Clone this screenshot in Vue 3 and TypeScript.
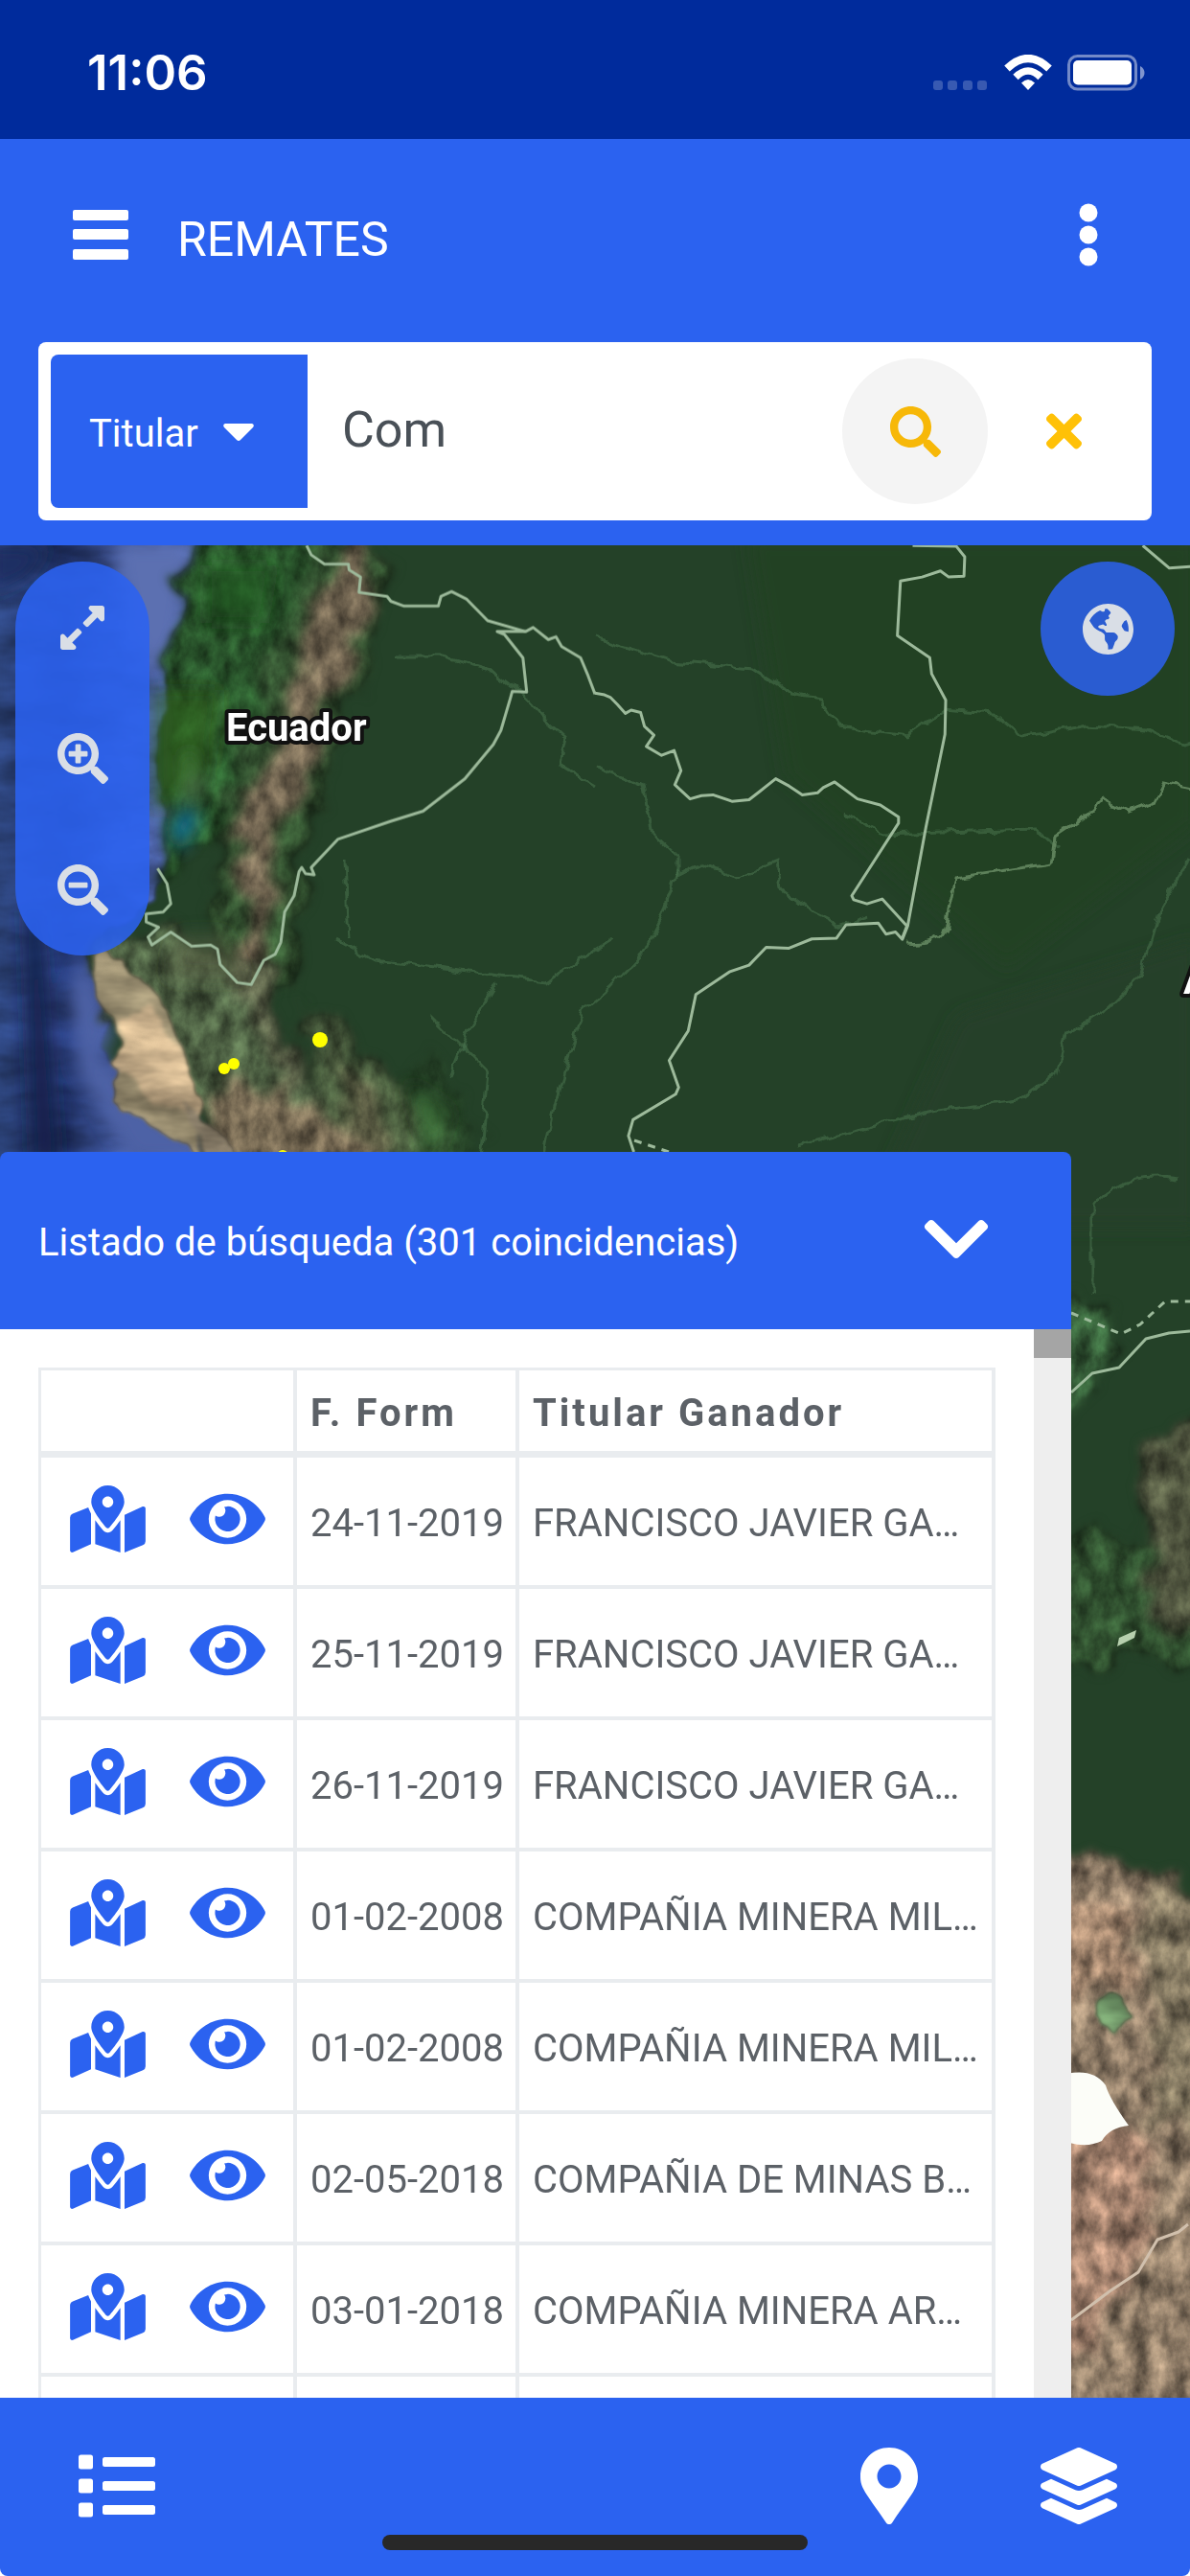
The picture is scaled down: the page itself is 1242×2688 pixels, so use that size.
<script setup lang="ts">
import { ref } from 'vue'

interface Result {
  date: string
  owner: string
}

const field = ref('Titular')
const query = ref('Com')
const total = 301

const results: Result[] = [
  { date: '24-11-2019', owner: 'FRANCISCO JAVIER GA…' },
  { date: '25-11-2019', owner: 'FRANCISCO JAVIER GA…' },
  { date: '26-11-2019', owner: 'FRANCISCO JAVIER GA…' },
  { date: '01-02-2008', owner: 'COMPAÑIA MINERA MIL…' },
  { date: '01-02-2008', owner: 'COMPAÑIA MINERA MIL…' },
  { date: '02-05-2018', owner: 'COMPAÑIA DE MINAS B…' },
  { date: '03-01-2018', owner: 'COMPAÑIA MINERA AR…' },
]

const icons = {
  search:
    'M505 442.7L405.3 343c-4.5-4.5-10.6-7-17-7H372c27.6-35.3 44-79.7 44-128C416 93.1 322.9 0 208 0S0 93.1 0 208s93.1 208 208 208c48.3 0 92.7-16.4 128-44v16.3c0 6.4 2.5 12.5 7 17l99.7 99.7c9.4 9.4 24.6 9.4 33.9 0l28.3-28.3c9.4-9.4 9.4-24.6.1-34zM208 336c-70.7 0-128-57.2-128-128 0-70.7 57.2-128 128-128 70.7 0 128 57.2 128 128 0 70.7-57.2 128-128 128z',
  times:
    'M242.72 256l100.07-100.07c12.28-12.28 12.28-32.19 0-44.48l-22.24-22.24c-12.28-12.28-32.19-12.28-44.48 0L176 189.28 75.93 89.21c-12.28-12.28-32.19-12.28-44.48 0L9.21 111.45c-12.28 12.28-12.28 32.19 0 44.48L109.28 256 9.21 356.07c-12.28 12.28-12.28 32.19 0 44.48l22.24 22.24c12.28 12.28 32.2 12.28 44.48 0L176 322.72l100.07 100.07c12.28 12.28 32.2 12.28 44.48 0l22.24-22.24c12.28-12.28 12.28-32.19 0-44.48L242.72 256z',
  expand:
    'M212.686 315.314L120 408l32.922 31.029c15.12 15.12 4.412 40.971-16.97 40.971h-112C10.697 480 0 469.255 0 456V344c0-21.382 25.803-32.09 40.922-16.971L72 360l92.686-92.686c6.248-6.248 16.379-6.247 22.628 0l25.372 25.373c6.249 6.248 6.249 16.378 0 22.627zm22.628-118.628L328 104l-32.922-31.029C279.958 57.851 290.666 32 312.048 32h112C437.303 32 448 42.745 448 56v112c0 21.382-25.803 32.09-40.922 16.971L376 152l-92.686 92.686c-6.248 6.248-16.379 6.247-22.628 0l-25.372-25.373c-6.249-6.248-6.249-16.378 0-22.627z',
  lens:
    'M505 476.7L476.7 505c-9.4 9.4-24.6 9.4-33.9 0L343 405.3c-4.5-4.5-7-10.6-7-17V372c-35.3 27.6-79.7 44-128 44C93.1 416 0 322.9 0 208S93.1 0 208 0s208 93.1 208 208c0 48.3-16.4 92.7-44 128h16.3c6.4 0 12.5 2.5 17 7l99.7 99.7c9.3 9.4 9.3 24.6 0 34zM344 208c0-75.2-60.8-136-136-136S72 132.8 72 208s60.8 136 136 136 136-60.8 136-136z',
  plus:
    'M304 192v32c0 6.6-5.4 12-12 12h-56v56c0 6.6-5.4 12-12 12h-32c-6.6 0-12-5.4-12-12v-56h-56c-6.6 0-12-5.4-12-12v-32c0-6.6 5.4-12 12-12h56v-56c0-6.6 5.4-12 12-12h32c6.6 0 12 5.4 12 12v56h56c6.6 0 12 5.4 12 12z',
  minus:
    'M304 192v32c0 6.6-5.4 12-12 12H124c-6.6 0-12-5.4-12-12v-32c0-6.6 5.4-12 12-12h168c6.6 0 12 5.4 12 12z',
  globe:
    'M248 8C111.03 8 0 119.03 0 256s111.03 248 248 248 248-111.03 248-248S384.97 8 248 8zm82.29 357.6c-3.9 3.88-7.99 7.95-11.31 11.28-2.99 3-5.1 6.7-6.17 10.71-1.51 5.66-2.73 11.38-4.77 16.87l-17.39 46.85c-13.76 3-28 4.69-42.65 4.69v-27.38c1.69-12.62-7.64-36.26-22.63-51.25-6-6-9.37-14.14-9.37-22.63v-32.01c0-11.64-6.27-22.34-16.46-27.97-14.37-7.95-34.81-19.06-48.81-26.11-11.48-5.78-22.1-13.14-31.65-21.75l-.8-.72a114.792 114.792 0 0 1-18.06-20.74c-9.38-13.77-24.66-36.42-34.59-51.14 20.47-45.5 57.36-82.04 103.2-101.89l24.01 12.01C203.48 89.74 216 82.01 216 70.11v-11.3c7.99-1.29 16.12-2.11 24.39-2.42l28.3 28.3c6.25 6.25 6.25 16.38 0 22.63L264 112l-10.34 10.34c-3.12 3.12-3.12 8.19 0 11.31l4.69 4.69c3.12 3.12 3.12 8.19 0 11.31l-8 8a8.008 8.008 0 0 1-5.66 2.34h-8.99c-2.08 0-4.08.81-5.58 2.27l-9.92 9.65a8.008 8.008 0 0 0-1.58 9.31l15.59 31.19c2.66 5.32-1.21 11.58-7.15 11.58h-5.64c-1.93 0-3.79-.7-5.24-1.96l-9.28-8.06a16.017 16.017 0 0 0-15.55-3.1l-31.17 10.39a11.95 11.95 0 0 0-8.17 11.34c0 4.53 2.56 8.66 6.61 10.69l11.08 5.54c9.41 4.71 19.79 7.16 30.31 7.16s22.59 27.29 32 32h66.75c8.49 0 16.62 3.37 22.63 9.37l13.69 13.69a30.503 30.503 0 0 1 8.93 21.57 46.536 46.536 0 0 1-13.72 32.98zM417 274.25c-5.79-1.45-10.84-5-14.15-9.97l-17.98-26.97a23.97 23.97 0 0 1 0-26.62l19.59-29.38c2.32-3.47 5.5-6.29 9.24-8.15l12.98-6.49C440.2 193.59 448 223.87 448 256c0 8.67-.74 17.16-1.82 25.54L417 274.25z',
  chevron:
    'M207.029 381.476L12.686 187.132c-9.373-9.373-9.373-24.569 0-33.941l22.667-22.667c9.357-9.357 24.522-9.375 33.901-.04L224 284.505l154.745-154.021c9.379-9.335 24.544-9.317 33.901.04l22.667 22.667c9.373 9.373 9.373 24.569 0 33.941L240.971 381.476c-9.373 9.372-24.569 9.372-33.942 0z',
  mapMarked:
    'M288 0c-69.59 0-126 56.41-126 126 0 56.26 82.35 158.8 113.9 196.02 6.39 7.54 17.82 7.54 24.2 0C331.65 284.8 414 182.26 414 126 414 56.41 357.59 0 288 0zm0 168c-23.2 0-42-18.8-42-42s18.8-42 42-42 42 18.8 42 42-18.8 42-42 42zM20.12 215.95A32.006 32.006 0 0 0 0 245.66v250.32c0 11.32 11.43 19.06 21.94 14.86L160 448V214.92c-8.84-15.98-16.07-31.54-21.25-46.42L20.12 215.95zM288 359.67c-14.07 0-27.38-6.18-36.51-16.96-19.66-23.2-40.57-49.62-59.49-76.72v182l192 64V266c-18.92 27.09-39.82 53.52-59.49 76.72-9.13 10.77-22.44 16.95-36.51 16.95zm266.06-198.51L416 224v288l139.88-55.95A31.996 31.996 0 0 0 576 426.34V176.02c0-11.32-11.43-19.06-21.94-14.86z',
  eye:
    'M572.52 241.4C518.29 135.59 410.93 64 288 64S57.68 135.64 3.48 241.41a32.35 32.35 0 0 0 0 29.19C57.71 376.41 165.07 448 288 448s230.32-71.64 284.52-177.41a32.35 32.35 0 0 0 0-29.19zM288 400a144 144 0 1 1 144-144 143.93 143.93 0 0 1-144 144zm0-240a95.31 95.31 0 0 0-25.31 3.79 47.85 47.85 0 0 1-66.9 66.9A95.78 95.78 0 1 0 288 160z',
  list:
    'M80 368H16a16 16 0 0 0-16 16v64a16 16 0 0 0 16 16h64a16 16 0 0 0 16-16v-64a16 16 0 0 0-16-16zm0-320H16A16 16 0 0 0 0 64v64a16 16 0 0 0 16 16h64a16 16 0 0 0 16-16V64a16 16 0 0 0-16-16zm0 160H16a16 16 0 0 0-16 16v64a16 16 0 0 0 16 16h64a16 16 0 0 0 16-16v-64a16 16 0 0 0-16-16zm416 176H176a16 16 0 0 0-16 16v32a16 16 0 0 0 16 16h320a16 16 0 0 0 16-16v-32a16 16 0 0 0-16-16zm0-320H176a16 16 0 0 0-16 16v32a16 16 0 0 0 16 16h320a16 16 0 0 0 16-16V80a16 16 0 0 0-16-16zm0 160H176a16 16 0 0 0-16 16v32a16 16 0 0 0 16 16h320a16 16 0 0 0 16-16v-32a16 16 0 0 0-16-16z',
  marker:
    'M172.268 501.67C26.97 291.031 0 269.413 0 192 0 85.961 85.961 0 192 0s192 85.961 192 192c0 77.413-26.97 99.031-172.268 309.67-9.535 13.774-29.93 13.773-39.464 0zM192 272c44.183 0 80-35.817 80-80s-35.817-80-80-80-80 35.817-80 80 35.817 80 80 80z',
  layers:
    'M12.41 148.02l232.94 105.67c6.8 3.09 14.49 3.09 21.29 0l232.94-105.67c16.55-7.51 16.55-32.52 0-40.03L266.65 2.31a25.607 25.607 0 0 0-21.29 0L12.41 107.98c-16.55 7.51-16.55 32.53 0 40.04zm487.18 88.28l-58.09-26.33-161.64 73.27c-7.56 3.43-15.59 5.17-23.86 5.17s-16.29-1.74-23.86-5.17L70.51 209.97l-58.1 26.33c-16.55 7.5-16.55 32.5 0 40l232.94 105.59c6.8 3.08 14.49 3.08 21.29 0L499.59 276.3c16.55-7.5 16.55-32.5 0-40zm0 127.8l-57.87-26.23-161.86 73.37c-7.56 3.43-15.59 5.17-23.86 5.17s-16.29-1.74-23.86-5.17L70.29 337.87 12.41 364.1c-16.55 7.5-16.55 32.5 0 40l232.94 105.59c6.8 3.08 14.49 3.08 21.29 0L499.59 404.1c16.55-7.5 16.55-32.5 0-40z',
}
</script>

<template>
  <div class="app">
    <div class="status">
      <span class="clock">11:06</span>
      <div class="signals">
        <svg class="dots" viewBox="0 0 58 38" aria-hidden="true">
          <g fill="#fff" opacity=".22">
            <rect x="0" y="27" width="10" height="10" rx="3" />
            <rect x="15" y="27" width="10" height="10" rx="3" />
            <rect x="31" y="27" width="10" height="10" rx="3" />
            <rect x="46" y="27" width="10" height="10" rx="3" />
          </g>
        </svg>
        <svg class="wifi" viewBox="0 0 50 38" aria-hidden="true">
          <g fill="none" stroke="#fff" stroke-width="8">
            <path d="M3 14.500Q25-6.500 47 14.500" />
            <path d="M12 23.500Q25 10.500 38 23.500" stroke-width="7.500" />
          </g>
          <path d="M25 37l-7-7.500q7-7 14 0z" fill="#fff" />
        </svg>
        <svg class="battery" viewBox="0 0 82 38" aria-hidden="true">
          <rect x="1.500" y="1.500" width="70" height="34.500" rx="9" fill="none" stroke="#fff" stroke-opacity=".45" stroke-width="3" />
          <rect x="6" y="6" width="61" height="25.500" rx="5" fill="#fff" />
          <path d="M76 12c6 3 6 11 0 14z" fill="#fff" fill-opacity=".5" />
        </svg>
      </div>
    </div>

    <header class="top">
      <div class="bar">
        <button class="plain menu" type="button" aria-label="Menú">
          <svg viewBox="0 0 58 52"><g fill="#fff"><rect width="58" height="11" rx="2" /><rect y="20" width="58" height="11" rx="2" /><rect y="41" width="58" height="11" rx="2" /></g></svg>
        </button>
        <h1>REMATES</h1>
        <button class="plain kebab" type="button" aria-label="Opciones">
          <svg viewBox="0 0 20 66"><g fill="#fff"><circle cx="10" cy="10" r="9.500" /><circle cx="10" cy="33" r="9.500" /><circle cx="10" cy="56" r="9.500" /></g></svg>
        </button>
      </div>
      <form class="search" @submit.prevent>
        <div class="picker">
          <select v-model="field" aria-label="Campo de búsqueda">
            <option>Titular</option>
          </select>
          <svg class="caret" viewBox="0 0 32 18" aria-hidden="true"><path d="M2 0h28q3 1 1 4L18 17q-2 2-4 0L1 4q-2-3 1-4z" fill="#fff" /></svg>
        </div>
        <input v-model="query" type="text" aria-label="Texto a buscar" />
        <button class="plain go" type="submit" aria-label="Buscar">
          <svg viewBox="0 0 512 512"><path :d="icons.search" fill="#f7b808" /></svg>
        </button>
        <button class="plain clear" type="button" aria-label="Borrar">
          <svg viewBox="0 0 352 512"><path :d="icons.times" fill="#ffc107" /></svg>
        </button>
      </form>
    </header>

    <main class="map">
      <svg class="terrain" viewBox="0 569 1242 1933" preserveAspectRatio="xMidYMin slice" role="img" aria-label="Mapa satelital">
        <defs>
          <linearGradient id="sea" gradientUnits="userSpaceOnUse" x1="0" y1="0" x2="230" y2="0">
            <stop offset="0" stop-color="#2c437a" />
            <stop offset=".3" stop-color="#21336a" />
            <stop offset=".6" stop-color="#465ca0" />
            <stop offset="1" stop-color="#5266a5" />
          </linearGradient>
          <filter id="rough" x="-10%" y="-5%" width="120%" height="110%" color-interpolation-filters="sRGB">
            <feTurbulence type="fractalNoise" baseFrequency=".025" numOctaves="5" seed="4" result="n" />
            <feDisplacementMap in="SourceGraphic" in2="n" scale="60" xChannelSelector="R" yChannelSelector="G" result="d" />
            <feGaussianBlur in="d" stdDeviation="6" result="b" />
            <feTurbulence type="fractalNoise" baseFrequency=".05 .035" numOctaves="5" seed="9" />
            <feColorMatrix values="1.300 0 0 0 -.15  1.300 0 0 0 -.15  1.300 0 0 0 -.15  0 0 0 0 1" result="g" />
            <feComposite in="b" in2="g" operator="arithmetic" k1="1" k2=".5" result="m" />
            <feComposite in="m" in2="b" operator="in" />
          </filter>
          <filter id="coast" x="-10%" y="-5%" width="120%" height="110%" color-interpolation-filters="sRGB">
            <feTurbulence type="fractalNoise" baseFrequency=".04" numOctaves="3" seed="2" result="n" />
            <feDisplacementMap in="SourceGraphic" in2="n" scale="14" xChannelSelector="R" yChannelSelector="G" result="d" />
            <feGaussianBlur in="d" stdDeviation="2" result="b" />
            <feTurbulence type="fractalNoise" baseFrequency=".012 .03" numOctaves="4" seed="12" />
            <feColorMatrix values="1.300 0 0 0 -.15  1.300 0 0 0 -.15  1.300 0 0 0 -.15  0 0 0 0 1" result="g" />
            <feComposite in="b" in2="g" operator="arithmetic" k1=".7" k2=".65" result="m" />
            <feComposite in="m" in2="b" operator="in" />
          </filter>
          <filter id="wiggle" x="-5%" y="-5%" width="110%" height="110%">
            <feTurbulence type="fractalNoise" baseFrequency=".06" numOctaves="2" seed="6" result="n" />
            <feDisplacementMap in="SourceGraphic" in2="n" scale="12" xChannelSelector="R" yChannelSelector="G" />
          </filter>
          <filter id="soft" x="-30%" y="-30%" width="160%" height="160%"><feGaussianBlur stdDeviation="9" /></filter>
        </defs>

        <rect y="560" width="1242" height="1950" fill="#244128" />
        <path d="M780 560h470v300l-200 150-230-200z" fill="#244322" filter="url(#soft)" opacity=".7" />
        <path d="M1000 1060l250-80v300h-350z" fill="#283f2b" filter="url(#soft)" opacity=".8" />

        <!-- ocean, the trench and the coastal shelf -->
        <g filter="url(#coast)">
          <path d="M-40 540H220L205 600 180 690 165 800 185 880 160 940 90 995 98 1020 120 1060 105 1095 150 1130 190 1155 225 1240H-40z" fill="url(#sea)" />
        </g>
        <g filter="url(#soft)">
          <path d="M120 569h80l-15 100-30 40-20-60z" fill="#5b6fb1" />
          <path d="M88 1000l14 30 16 50-15 22 50 40 40 20 25 50h-80l-55-90-10-90z" fill="#4e62a6" />
          <path d="M25 950h18l18 260H34z" fill="#12204d" />
          <path d="M-10 570h60l-20 30-40 20z" fill="#1d2e64" />
          <path d="M165 840l25-10 10 40-22 20z" fill="#5d719d" />
        </g>

        <!-- coastal lowlands and the ridge -->
        <g filter="url(#rough)">
          <path d="M185 590 230 555H355L320 670 290 760 260 830 200 890 160 930 172 850 165 700 195 650z" fill="#28522a" />
          <path d="M340 560l80 20-40 120-50 160-20 120 10 60-70 0-40-60 30-150 40-160z" fill="#32502f" />
          <path d="M360 565l40-10-12 90-42 95-22 75-34 75-10 70-4 60-26-10 4-90-14-50 52-100 14-75 30-70z" fill="#6c604d" />
        </g>
        <g filter="url(#rough)">
          <path d="M95 985l80-20 70 40 30 80 60 60 80 60 40 50H235L200 1130l-70-50z" fill="#4c5f42" />
          <path d="M250 960l40 60 10 60 30 60-30 0-50-90z" fill="#5a6048" />
          <path d="M310 1050l70 30 80 90 20 50H345l-10-80z" fill="#46583b" />
          <path d="M225 1120l70 20 70 40 50 40H225z" fill="#756852" />
          <path d="M430 1090l60 50 10 90h-60z" fill="#2f5230" opacity=".8" />
          <path d="M350 1090l20 40 40 60-10 30-40-50z" fill="#6d624c" opacity=".6" />
        </g>
        <g filter="url(#coast)">
          <path d="M95 998l18-8 30 25 25 25 24 60 20 55-8 30 10 25-48-30-50-30 5-30 12-20-22-42-12-22z" fill="#9c9072" />
          <path d="M120 1065l36-16 32 51 26 50-5 20-56-25-38-40 18-18z" fill="#c6ad89" />
          <path d="M190 1150l20 10 50 60h-40z" fill="#9a8d76" />
        </g>
        <g filter="url(#soft)">
          <path d="M176 865l20-25 12 15-20 32z" fill="#137596" />
          <path d="M190 790l12-6 8 40-12 10z" fill="#5b7d56" />
          <path d="M215 590h70l-10 60h-60z" fill="#20591c" opacity=".6" />
          <path d="M160 720l70 0-10 80-60 50z" fill="#306a20" opacity=".6" />
          <path d="M185 975l50 0 20 45-80 0z" fill="#5c6345" opacity=".5" />
          <path d="M425 1130l45 30-20 50z" fill="#3c7039" opacity=".7" />
        </g>

        <!-- southern lowlands and highlands beside the results panel -->
        <g filter="url(#rough)">
          <path d="M1110 1340l50 20 10 60-50 60h-20z" fill="#37603a" />
          <path d="M1090 1600h180v140h-180z" fill="#30502f" />
          <path d="M1190 1510l70-40v230l-60-10z" fill="#50553f" />
          <path d="M1080 1920l70 20 40 0 80 50v560h-190z" fill="#8f7c67" />
          <path d="M1090 1980l80 0 20 80-100 40z" fill="#a3866e" />
          <path d="M1195 1960l80 30v240l-70-20z" fill="#81765f" />
          <path d="M1090 2230l110-20 0 120-110 180z" fill="#a07f6b" />
        </g>
        <path d="M1146 2085q18-12 30 6l6 18-16 14-18-12q-10-14-2-26z" fill="#6f9567" filter="url(#coast)" />
        <path d="M1100 2168q38-14 54 8 4 14 24 42-20 2-28 16-20 10-50-4z" fill="#fcfdf8" />
        <path d="M1168 1709l18-8-2 8-18 9z" fill="#b7d0ae" />

        <!-- rivers -->
        <g class="rivers" filter="url(#wiggle)">
          <path d="M412 685l50 0 50 14 36 28 18 20 25 22-6 30 36 22" />
          <path d="M621 665l80 25 85 8 40 25 30 5 20 30 70 10 40-28 50 4 30 25 70-12 60 4 40 17 60-16" />
          <path d="M621 800l50 20 10 50 25 24 0 20 24-12 40 14 40-17 4 28 34 25 28 14 30-10" />
          <path d="M706 910l-14 44-20 40-34 36-30 25-30 100-16 80" />
          <path d="M350 980l40 22 180 22 70-45" />
          <path d="M520 1024l-30 50-20 50" />
          <path d="M450 1060l60 60-10 100" />
          <path d="M1242 895l-30 50-20 70-40 40-40 25-10 40-40 28-90 12-140 36" />
          <path d="M1140 1350l0-90q30-40 90-30" />
          <path d="M360 900l4 80" />
          <path d="M880 850l40 20 160-5 25 20" />
        </g>
        <g class="rivers bright" filter="url(#wiggle)">
          <path d="M945 984q44 4 44-28l8-40 100-15 4-28 30-20 20-20 28 14 25-10 10-20 30 6 30-2" />
        </g>

        <!-- borders -->
        <g class="borders">
          <g transform="translate(0 560) scale(.396 .421)">
            <path d="M808 22L820 45 855 68H918L920 82 950 100 946 138 1020 148 1030 160 1065 172H1155L1162 148 1190 136 1230 155 1285 208 1385 235 1405 225 1445 255 1465 248 1480 272 1530 300 1550 345 1568 390" />
            <path d="M1385 235H1310L1330 243 1378 300 1388 385 1350 383 1345 400 1320 480 1300 515 1225 600 1115 680 1030 705 890 750 820 820 828 838 805 835 795 820 788 830 775 890 750 930 740 1005 725 1035 695 1050 662 1110 625 1105 580 1060 573 1022 555 1012 505 1015 450 980 400 1012 390 992 418 968 385 955 385 935 430 930 450 910 440 860 415 822" />
          </g>
          <g transform="translate(621 560) scale(.397 .421)">
            <path d="M0 388L25 392 40 398 58 415 80 438 95 430 120 436 130 470 155 492 135 520 175 542 208 530 226 580 210 615 250 650 280 642 310 640 360 656 405 652 435 630 475 600 510 618 545 640 585 635 600 622 630 608 690 650 750 665 798 695 798 710 675 890 680 900 715 910 755 898 820 965 808 995" />
            <path d="M835 22L950 24 972 50 970 98 930 100 908 85 860 100 803 110 795 245 880 300 885 340 922 405 920 490 870 720 822 965 808 998 790 980 765 985 745 958 660 962 635 995 570 997 510 1020 450 1018 405 1062 355 1078 265 1135 245 1225 195 1298 220 1365 212 1382 100 1445 88 1485 102 1525" />
            <path d="M1440 22l70 56 56-4" />
          </g>
          <path d="M1118 1453l22-20 28-6 28-30 24-6 22-2" />
          <path d="M1118 2421l40-30 30-20 20-34 22-8 10-8" class="faint" />
          <path d="M1118 1370l52 22 20-10 26-24h26" class="dashed" />
          <path d="M662 1190l36 12" class="dashed" />
        </g>

        <g class="finds">
          <circle cx="334" cy="1085" r="8" />
          <circle cx="234" cy="1115" r="6" />
          <circle cx="244" cy="1110" r="6" />
          <circle cx="295" cy="1206" r="6" />
        </g>
        <g class="places">
          <text x="236" y="773">Ecuador</text>
          <text x="1235" y="1037">A</text>
        </g>
      </svg>

      <div class="tools">
        <div class="pill">
          <button class="plain" type="button" aria-label="Ver todo"><svg class="i46" viewBox="0 32 448 448"><path :d="icons.expand" /></svg></button>
          <button class="plain" type="button" aria-label="Acercar"><svg viewBox="0 0 512 512"><path :d="icons.lens" /><path :d="icons.plus" /></svg></button>
          <button class="plain" type="button" aria-label="Alejar"><svg viewBox="0 0 512 512"><path :d="icons.lens" /><path :d="icons.minus" /></svg></button>
        </div>
        <button class="plain world" type="button" aria-label="Mapa base"><svg viewBox="0 8 496 496"><path :d="icons.globe" /></svg></button>
      </div>

      <section class="panel">
        <div class="panel-head">
          <h2>Listado de búsqueda ({{ total }} coincidencias)</h2>
          <button class="plain fold" type="button" aria-label="Contraer">
            <svg viewBox="0 120 448 272"><path :d="icons.chevron" fill="#fff" /></svg>
          </button>
        </div>
        <div class="panel-body">
          <div class="sheet">
            <table>
              <thead>
                <tr>
                  <th class="acts"></th>
                  <th class="date">F. Form</th>
                  <th>Titular Ganador</th>
                </tr>
              </thead>
              <tbody>
                <tr v-for="(row, i) in results" :key="i">
                  <td class="acts">
                    <div class="pair">
                      <button class="plain" type="button" aria-label="Ubicar"><svg viewBox="0 0 576 512"><path :d="icons.mapMarked" /></svg></button>
                      <button class="plain" type="button" aria-label="Ver detalle"><svg viewBox="0 0 576 512"><path :d="icons.eye" /></svg></button>
                    </div>
                  </td>
                  <td>{{ row.date }}</td>
                  <td>{{ row.owner }}</td>
                </tr>
                <tr><td></td><td></td><td></td></tr>
              </tbody>
            </table>
          </div>
          <div class="track"><div class="thumb"></div></div>
        </div>
      </section>
    </main>

    <footer class="dock">
      <button class="plain" type="button" aria-label="Listado"><svg class="w80" viewBox="0 0 512 512"><path :d="icons.list" /></svg></button>
      <div class="dock-end">
        <button class="plain" type="button" aria-label="Ubicación"><svg class="w60" viewBox="0 0 384 512"><path :d="icons.marker" /></svg></button>
        <button class="plain" type="button" aria-label="Capas"><svg class="w80" viewBox="0 0 512 512"><path :d="icons.layers" /></svg></button>
      </div>
      <div class="home"></div>
    </footer>
  </div>
</template>

<style>
body {
  margin: 0;
  background: #fff;
}
</style>

<style scoped>
.app {
  display: flex;
  flex-direction: column;
  height: 100vh;
  font-family: Roboto, 'Liberation Sans', sans-serif;
  font-size: 40px;
}
.app * {
  box-sizing: border-box;
}
svg {
  display: block;
}
.plain {
  display: flex;
  align-items: center;
  justify-content: center;
  padding: 0;
  border: 0;
  background: none;
}

/* status strip */
.status {
  display: flex;
  flex: none;
  align-items: center;
  justify-content: space-between;
  height: 145px;
  padding: 6px 46px 0 91px;
  background: #002b9c;
}
.clock {
  color: #fff;
  font-family: Inter, sans-serif;
  font-size: 51px;
  font-weight: 600;
}
.signals {
  display: flex;
  gap: 16px;
}
.dots {
  width: 58px;
  height: 38px;
}
.wifi {
  width: 50px;
  height: 38px;
}
.battery {
  width: 82px;
  height: 38px;
}

/* header */
.top {
  flex: none;
  padding: 0 40px 26px;
  background: #2b62f0;
}
.bar {
  display: flex;
  align-items: center;
  height: 212px;
  padding: 0 56px 12px 36px;
}
.menu svg {
  width: 58px;
  height: 52px;
}
.bar h1 {
  flex: 1;
  margin: 10px 0 0 51px;
  color: #fff;
  font-size: 50px;
  font-weight: 400;
}
.kebab svg {
  width: 20px;
  height: 66px;
}
.search {
  display: flex;
  align-items: center;
  height: 186px;
  padding: 13px;
  border-radius: 8px;
  background: #fff;
}
.picker {
  position: relative;
  flex: none;
  align-self: stretch;
  width: 268px;
}
.picker select {
  width: 100%;
  height: 100%;
  padding: 4px 0 0 40px;
  border: 0;
  border-radius: 8px 0 0 8px;
  appearance: none;
  background: #2b62f0;
  color: #fff;
  font: inherit;
}
.caret {
  position: absolute;
  top: 72px;
  right: 56px;
  width: 32px;
  height: 18px;
  pointer-events: none;
}
.search input {
  flex: 1;
  min-width: 0;
  height: 100%;
  padding: 0 36px 4px;
  border: 0;
  background: none;
  color: #495057;
  font-family: inherit;
  font-size: 52px;
}
.go {
  width: 152px;
  height: 152px;
  border-radius: 50%;
  background: #f4f4f4;
}
.go svg {
  width: 53px;
  height: 53px;
}
.clear {
  width: 158px;
  height: 152px;
}
.clear svg {
  width: 37px;
  height: 54px;
}

/* map */
.map {
  position: relative;
  display: flex;
  flex: 1;
  flex-direction: column;
  min-height: 0;
  overflow: hidden;
}
.terrain {
  position: absolute;
  inset: 0;
  width: 100%;
  height: 100%;
}
.rivers path {
  fill: none;
  stroke: #4b7450;
  stroke-opacity: 0.55;
  stroke-width: 3;
}
.bright path {
  stroke: #64875f;
  stroke-opacity: 0.9;
}
.borders path {
  fill: none;
  stroke: #9dba9b;
  stroke-width: 3;
  stroke-linejoin: round;
  vector-effect: non-scaling-stroke;
}
.borders .faint {
  stroke: #d1c0ad;
}
.borders .dashed {
  stroke-dasharray: 8 7;
}
.finds {
  fill: #ffff00;
}
.places {
  fill: #fff;
  stroke: #111;
  stroke-width: 8;
  stroke-linejoin: round;
  paint-order: stroke;
  font-size: 40px;
  font-weight: 700;
}
.tools {
  position: relative;
  display: flex;
  flex: none;
  align-items: flex-start;
  justify-content: space-between;
  padding: 17px 16px 205px;
}
.tools path {
  fill: #d9dee6;
}
.pill {
  display: flex;
  flex-direction: column;
  width: 140px;
  border-radius: 70px;
  background: rgba(43, 98, 240, 0.88);
}
.pill button {
  height: 137px;
}
.pill svg,
.world svg {
  width: 53px;
  height: 53px;
}
.pill .i46 {
  width: 46px;
  height: 46px;
}
.world {
  width: 140px;
  height: 140px;
  border-radius: 50%;
  background: rgba(43, 98, 240, 0.85);
}

/* results */
.panel {
  position: relative;
  display: flex;
  flex: 1;
  flex-direction: column;
  width: 90%;
  min-height: 0;
}
.panel-head {
  display: flex;
  flex: none;
  align-items: center;
  justify-content: space-between;
  height: 185px;
  padding: 0 86px 4px 40px;
  border-radius: 8px 8px 0 0;
  background: #2b62f0;
}
.panel-head h2 {
  margin: 8px 0 0;
  color: #fff;
  font-size: 40px;
  font-weight: 400;
}
.fold svg {
  width: 68px;
  height: 42px;
}
.panel-body {
  display: flex;
  flex: 1;
  min-height: 0;
  overflow: hidden;
  background: #fff;
}
.sheet {
  flex: 1;
  padding: 40px 40px 0;
}
table {
  width: 100%;
  border-top: 3px solid #e9ecef;
  border-left: 3px solid #e9ecef;
  border-collapse: separate;
  border-spacing: 0;
  color: #5c6167;
}
th,
td {
  padding: 4px 0 0 14px;
  border-right: 4px solid #e9ecef;
  border-bottom: 4px solid #e9ecef;
  text-align: left;
  white-space: nowrap;
}
th {
  height: 91px;
  border-bottom-width: 7px;
  font-weight: 700;
  letter-spacing: 3px;
}
td {
  height: 137px;
}
th.acts {
  width: 267px;
}
th.date {
  width: 232px;
}
td.acts {
  padding: 0;
}
.pair {
  display: flex;
  gap: 46px;
  padding: 0 0 6px 30px;
}
.pair svg {
  width: 79px;
  height: 70px;
}
.pair path {
  fill: #2b62f0;
}
.track {
  flex: none;
  width: 39px;
  background: #eee;
}
.thumb {
  height: 30px;
  background: #a5a5a5;
}

/* bottom bar */
.dock {
  position: relative;
  display: flex;
  flex: none;
  align-items: center;
  justify-content: space-between;
  height: 186px;
  padding: 0 76px 2px 82px;
  border-radius: 0 0 8px 8px;
  background: #2b62f0;
}
.dock path {
  fill: #fff;
}
.dock-end {
  display: flex;
  gap: 128px;
}
.w80 {
  width: 80px;
  height: 80px;
}
.w60 {
  width: 60px;
  height: 80px;
}
.home {
  position: absolute;
  bottom: 27px;
  left: 50%;
  width: 444px;
  height: 16px;
  border-radius: 8px;
  background: #282828;
  transform: translateX(-50%);
}
</style>
